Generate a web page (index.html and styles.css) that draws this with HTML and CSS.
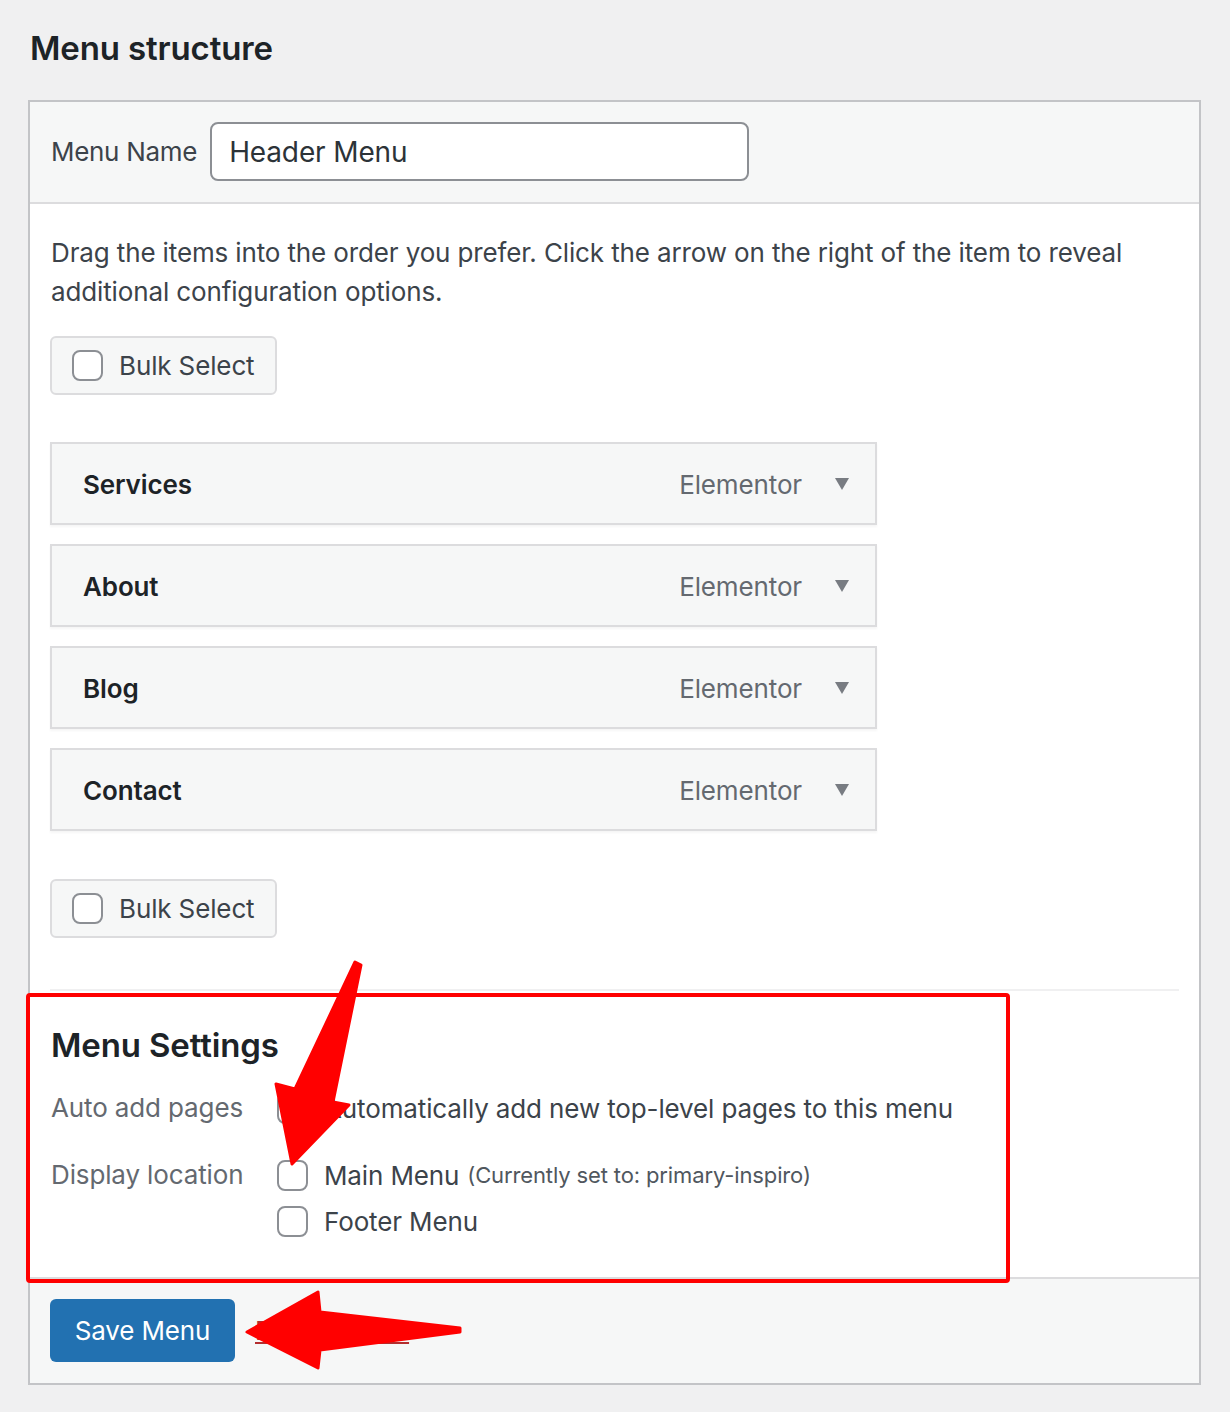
FILE: index.html
```html
<!DOCTYPE html>
<html>
    <head>
        <link rel="stylesheet" href="styles.css">
    </head>
    <body>
        <div class="wrap">
            <h2 class="title">Menu structure</h2>

            <div class="panel">
                <div class="panel-head">
                    <label class="name-label" for="menu-name">Menu Name</label>
                    <input class="name-input" id="menu-name" type="text" value="Header Menu">
                </div>

                <div class="panel-body">
                    <p class="hint">Drag the items into the order you prefer. Click the arrow on the right of the item to reveal additional configuration options.</p>

                    <label class="bulk"><span class="box"></span>Bulk Select</label>

                    <ul class="items">
                        <li class="item">
                            <span class="item-title">Services</span>
                            <span class="item-type">Elementor</span>
                            <svg class="caret" width="14" height="12" viewBox="0 0 14 12"><path d="M0 0H14L7 12Z"/></svg>
                        </li>
                        <li class="item">
                            <span class="item-title">About</span>
                            <span class="item-type">Elementor</span>
                            <svg class="caret" width="14" height="12" viewBox="0 0 14 12"><path d="M0 0H14L7 12Z"/></svg>
                        </li>
                        <li class="item">
                            <span class="item-title">Blog</span>
                            <span class="item-type">Elementor</span>
                            <svg class="caret" width="14" height="12" viewBox="0 0 14 12"><path d="M0 0H14L7 12Z"/></svg>
                        </li>
                        <li class="item">
                            <span class="item-title">Contact</span>
                            <span class="item-type">Elementor</span>
                            <svg class="caret" width="14" height="12" viewBox="0 0 14 12"><path d="M0 0H14L7 12Z"/></svg>
                        </li>
                    </ul>

                    <label class="bulk"><span class="box"></span>Bulk Select</label>

                    <div class="settings">
                        <h3 class="settings-title">Menu Settings</h3>
                        <div class="row">
                            <div class="row-label">Auto add pages</div>
                            <div class="row-field">
                                <label class="check"><span class="box"></span>Automatically add new top-level pages to this menu</label>
                            </div>
                        </div>
                        <div class="row">
                            <div class="row-label">Display location</div>
                            <div class="row-field">
                                <label class="check"><span class="box"></span>Main Menu <span class="set-to">(Currently set to: primary-inspiro)</span></label>
                                <label class="check"><span class="box"></span>Footer Menu</label>
                            </div>
                        </div>
                    </div>
                </div>

                <div class="panel-foot">
                    <button class="save">Save Menu</button>
                    <a class="delete" href="#">Delete Menu</a>
                </div>
            </div>
        </div>

        <svg class="marks" width="1230" height="1412" viewBox="0 0 1230 1412">
            <rect x="28" y="995" width="980" height="286" rx="2" fill="none" stroke="#ff0000" stroke-width="4"/>
            <polygon points="355,962 361,965 333,1102 349,1105 292,1164 276,1084 295,1089" fill="#ff0000" stroke="#ff0000" stroke-width="3" stroke-linejoin="round"/>
            <polygon points="247,1332 318,1292 320,1312 460,1328 460,1332 320,1350 318,1368" fill="#ff0000" stroke="#ff0000" stroke-width="3" stroke-linejoin="round"/>
        </svg>
    </body>
</html>
```

FILE: styles.css
```css
body {
    margin: 0;
    background: #f0f0f1;
    color: #3c434a;
    font-family: Inter, "Noto Sans", sans-serif;
    font-size: 26px;
    letter-spacing: -0.13px;
    position: relative;
    min-height: 1412px;
}

.wrap {
    padding: 25px 29px 0 28px;
}

.title {
    margin: 0 0 29px 2px;
    font-size: 33px;
    line-height: 46px;
    font-weight: 600;
    color: #1d2327;
}

.panel {
    width: 1169px;
    border: 2px solid #c3c4c7;
    background: white;
}

.panel-head {
    background: #f6f7f7;
    border-bottom: 2px solid #dcdcde;
    padding: 20px 20px 21px 21px;
    display: flex;
    align-items: center;
    gap: 13px;
}

.name-label {
    color: #3c434a;
    letter-spacing: -0.3px;
}

.name-input {
    width: 539px;
    height: 59px;
    box-sizing: border-box;
    border: 2px solid #8c8f94;
    border-radius: 8px;
    padding: 0 17px;
    font-family: inherit;
    font-size: 28px;
    letter-spacing: -0.13px;
    color: #2c3338;
    background: white;
}

.panel-body {
    padding: 29px 20px 0 20px;
}

.hint {
    margin: 0 0 25px 1px;
    line-height: 39px;
}

.bulk {
    display: inline-flex;
    align-items: center;
    gap: 16px;
    height: 59px;
    box-sizing: border-box;
    padding: 0 20px;
    background: #f6f7f7;
    border: 2px solid #dcdcde;
    border-radius: 6px;
    color: #3c434a;
}

.box {
    display: inline-block;
    width: 31px;
    height: 31px;
    box-sizing: border-box;
    border: 2px solid #8c8f94;
    border-radius: 8px;
    background: white;
    flex: none;
}

.items {
    list-style: none;
    margin: 47px 0 48px 0;
    padding: 0;
    width: 827px;
}

.item {
    display: flex;
    align-items: center;
    height: 83px;
    box-sizing: border-box;
    margin-bottom: 19px;
    padding: 2px 26px 0 31px;
    background: #f6f7f7;
    border: 2px solid #dcdcde;
    box-shadow: 0 2px 2px rgba(0, 0, 0, 0.04);
}

.item:last-child {
    margin-bottom: 0;
}

.item-title {
    flex: 1;
    font-weight: 600;
    color: #1d2327;
}

.item-type {
    color: #646970;
    margin-right: 33px;
}

.caret {
    fill: #787c82;
    margin-top: -2px;
}

.settings {
    margin-top: 51px;
    border-top: 2px solid #f0f0f1;
    padding: 33px 0 33px 0;
}

.settings-title {
    margin: 0 0 19px 1px;
    font-size: 33px;
    line-height: 42px;
    font-weight: 600;
    color: #1d2327;
}

.row {
    display: flex;
    margin-bottom: 21px;
}

.row:last-child {
    margin-bottom: 0;
}

.row-label {
    width: 227px;
    padding-left: 1px;
    box-sizing: border-box;
    color: #646970;
    line-height: 46px;
}

.row-field {
    display: flex;
    flex-direction: column;
}

.check {
    display: flex;
    align-items: center;
    gap: 16px;
    height: 46px;
    color: #3c434a;
}

.set-to {
    font-size: 22px;
    color: #50575e;
    margin-left: -8px;
}

.panel-foot {
    background: #f6f7f7;
    border-top: 2px solid #dcdcde;
    padding: 20px 20px 21px 20px;
    display: flex;
    align-items: center;
    gap: 20px;
}

.save {
    width: 185px;
    height: 63px;
    border: none;
    border-radius: 6px;
    background: #2271b1;
    color: white;
    font-family: inherit;
    font-size: 26px;
    letter-spacing: -0.13px;
}

.delete,
.delete:visited {
    color: #b32d2e;
    text-decoration: underline;
}

.marks {
    position: absolute;
    left: 0;
    top: 0;
}
```
